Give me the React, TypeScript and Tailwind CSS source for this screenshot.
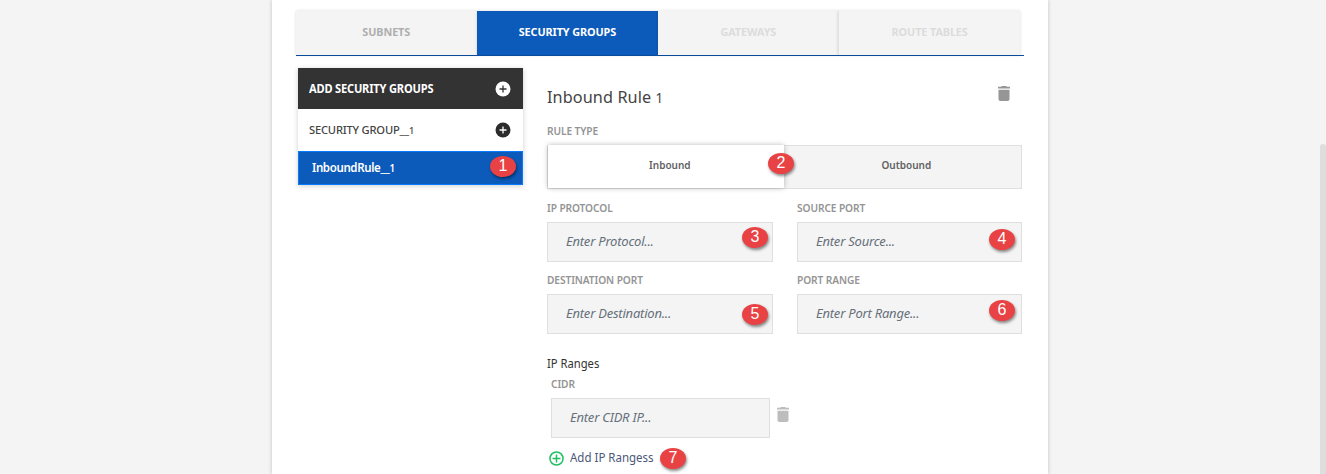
import type { ReactNode } from "react";

function Badge({ n, className }: { n: number; className: string }) {
  return (
    <span
      className={`absolute z-10 flex h-[21px] w-[26px] items-center justify-center rounded-[50%] bg-[#e94244] pb-[2px] font-['Liberation_Sans'] text-[16px] leading-none font-normal not-italic tracking-normal text-white shadow-[1px_2px_3px_rgba(0,0,0,0.45)] ${className}`}
    >
      {n}
    </span>
  );
}

function Trash({ className }: { className: string }) {
  return (
    <svg viewBox="6 3 12 18" preserveAspectRatio="none" className={className} fill="currentColor">
      <path d="M6.500 19c0 1.100.9 2 2 2h7c1.100 0 2-.9 2-2V7.500h-11V19zM18 4h-3l-1-1h-4l-1 1H6v2h12V4z" />
    </svg>
  );
}

function PlusDisc({ disc, mark }: { disc: string; mark: string }) {
  return (
    <svg viewBox="0 0 16 16" className="h-4 w-4">
      <circle cx="8" cy="8" r="7.500" fill={disc} />
      <path d="M8 4.500v7M4.500 8h7" stroke={mark} strokeWidth="1.300" />
    </svg>
  );
}

function Label({ children }: { children: ReactNode }) {
  return (
    <div className="h-[21px] origin-left scale-x-[0.925] text-[11px] leading-[14px] font-semibold tracking-[-0.1px] text-[#949494]">
      {children}
    </div>
  );
}

function Field({ label, placeholder, children }: { label: string; placeholder: string; children?: ReactNode }) {
  return (
    <div className="relative">
      <Label>{label}</Label>
      <div className="flex h-[40px] items-center border border-[#dfdfdf] bg-[#f4f4f4] pb-px pl-[18px] text-[13px] tracking-[-0.22px] text-[#66707a] italic">
        {placeholder}
      </div>
      {children}
    </div>
  );
}

const tabs = [
  { name: "SUBNETS", style: "bg-[#f4f4f4] text-[#aeaeae]" },
  { name: "SECURITY GROUPS", style: "bg-[#0c5aba] text-white" },
  { name: "GATEWAYS", style: "bg-[#f4f4f4] text-[#dcdcdc]" },
  { name: "ROUTE TABLES", style: "bg-[#f4f4f4] text-[#dcdcdc] border-l border-[#e2e2e2]" },
];

export default function App() {
  return (
    <div className="flex h-[474px] w-[1326px] overflow-hidden bg-[#f4f4f4] font-['Noto_Sans',sans-serif]">
      <div className="flex flex-1 justify-center">
        <main className="h-full w-[776px] bg-white px-[24px] pt-[11px] shadow-[0_0_4px_rgba(0,0,0,0.22)]">
          <nav className="flex h-[45px] w-[728px] border-b border-[#0b4fa5] pr-[4px]">
            {tabs.map((t) => (
              <div
                key={t.name}
                className={`flex flex-1 items-center justify-center pb-[2px] text-[11px] font-bold tracking-[-0.1px] shadow-[0_0_3px_rgba(0,0,0,0.15)] ${t.style}`}
              >
                <span className="scale-x-[0.985]">{t.name}</span>
              </div>
            ))}
          </nav>
          <div className="flex pt-[12px] pl-[2px]">
            <aside className="h-[117px] w-[225px] shadow-[0_1px_5px_rgba(0,0,0,0.2)]">
              <div className="flex h-[41px] items-center justify-between bg-[#333] pr-[12px] pl-[11px] text-[11.500px] font-bold tracking-[-0.2px] text-white">
                <span className="origin-left scale-x-[0.965]">ADD SECURITY GROUPS</span>
                <PlusDisc disc="#fff" mark="#333" />
              </div>
              <div className="flex h-[42px] items-center justify-between bg-white pr-[12px] pl-[11px] text-[11.500px] font-medium tracking-[-0.2px] text-[#444]">
                <span className="origin-left scale-x-[0.97]">
                  SECURITY GROUP__<span className="text-[9.500px]">1</span>
                </span>
                <PlusDisc disc="#2b2b2b" mark="#fff" />
              </div>
              <div className="relative flex h-[34px] items-center border border-[#087aff] bg-[#0c5aba] pl-[13px] text-[12.500px] font-semibold tracking-[-0.4px] text-white">
                <span className="origin-left scale-x-[0.92]">
                  InboundRule__<span className="text-[10.500px]">1</span>
                </span>
                <Badge n={1} className="top-[4px] left-[191px]" />
              </div>
            </aside>
            <section className="ml-[24px] w-[475px]">
              <header className="flex h-[56px] items-center justify-between pr-[12px]">
                <h1 className="origin-left scale-x-[0.955] pt-[2px] text-[17px] tracking-[0.1px] text-[#444]">
                  Inbound Rule <span className="text-[14px]">1</span>
                </h1>
                <Trash className="mb-[6px] h-[15px] w-[12px] text-[#969696]" />
              </header>
              <Label>RULE TYPE</Label>
              <div className="relative flex h-[44px] border border-[#dfdfdf] bg-[#f4f4f4] pb-px text-[11px] font-semibold text-[#626262]">
                <div className="-mt-px -mb-px flex w-[236px] items-center justify-center bg-white pb-[3px] pl-[8px] shadow-[0_0_5px_rgba(0,0,0,0.28)]">
                  <span className="scale-x-[0.91]">Inbound</span>
                </div>
                <div className="flex flex-1 items-center justify-center pb-[3px] pl-[8px]">
                  <span className="scale-x-[0.91]">Outbound</span>
                </div>
                <Badge n={2} className="top-[7px] left-[220px]" />
              </div>
              <div className="mt-[12px] grid grid-cols-[226px_225px] gap-x-[24px] gap-y-[11px]">
                <Field label="IP PROTOCOL" placeholder="Enter Protocol...">
                  <Badge n={3} className="top-[26px] left-[195px]" />
                </Field>
                <Field label="SOURCE PORT" placeholder="Enter Source...">
                  <Badge n={4} className="top-[28px] left-[192px]" />
                </Field>
                <Field label="DESTINATION PORT" placeholder="Enter Destination...">
                  <Badge n={5} className="top-[31px] left-[195px]" />
                </Field>
                <Field label="PORT RANGE" placeholder="Enter Port Range...">
                  <Badge n={6} className="top-[27px] left-[192px]" />
                </Field>
              </div>
              <h2 className="mt-[22px] h-[21px] origin-left scale-x-[0.935] text-[12px] leading-[16px] text-[#333]">IP Ranges</h2>
              <div className="flex items-center gap-[7px] pl-[4px]">
                <div className="w-[219px]">
                  <Field label="CIDR" placeholder="Enter CIDR IP..." />
                </div>
                <Trash className="mt-[14px] h-[15px] w-[12px] text-[#bdbdbd]" />
              </div>
              <div className="relative mt-[10px] flex h-[20px] items-center gap-[6px] pl-[2px] text-[12.500px] text-[#4b5878]">
                <svg viewBox="0 0 16 16" className="h-[15px] w-[15px]" fill="none" stroke="#20bf63" strokeWidth="1.600">
                  <circle cx="8" cy="8" r="7" />
                  <path d="M8 3.800v8.400M3.800 8h8.400" />
                </svg>
                <span className="origin-left scale-x-[0.92]">Add IP Rangess</span>
                <Badge n={7} className="top-0 left-[113px]" />
              </div>
            </section>
          </div>
        </main>
      </div>
      <div className="w-[6px] pt-[144px]">
        <div className="h-full rounded-t-[3px] bg-[#dedede]" />
      </div>
    </div>
  );
}
